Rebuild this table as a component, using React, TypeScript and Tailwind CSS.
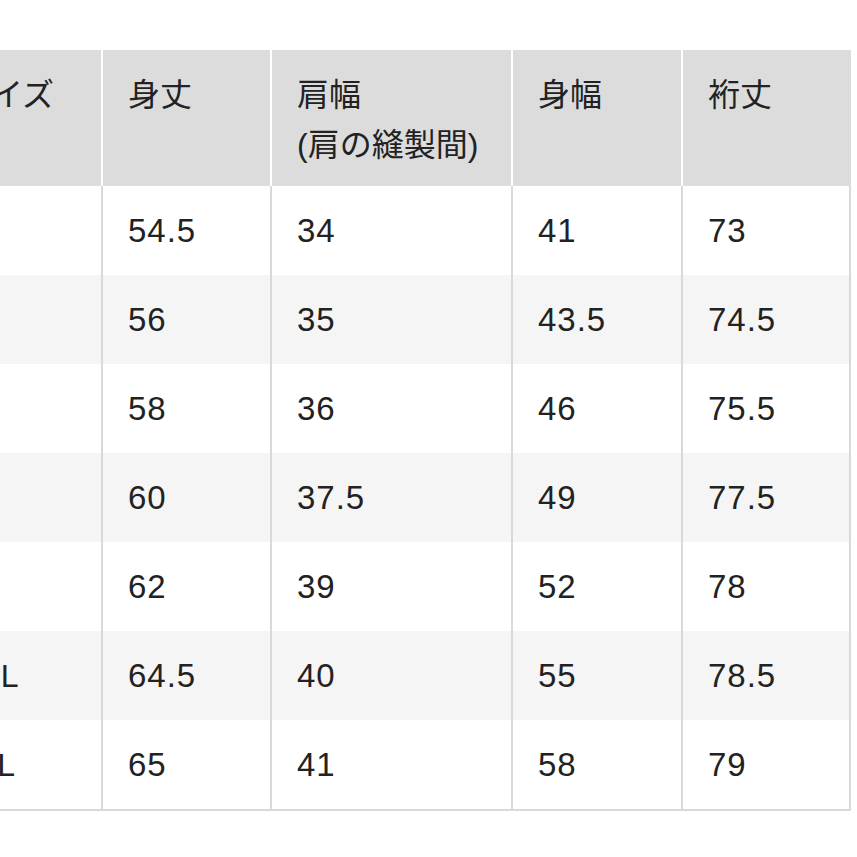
const header = ['サイズ', '身丈', '肩幅\n(肩の縫製間)', '身幅', '裄丈']

const rows = [
  ['XS', '54.5', '34', '41', '73'],
  ['S', '56', '35', '43.5', '74.5'],
  ['M', '58', '36', '46', '75.5'],
  ['L', '60', '37.5', '49', '77.5'],
  ['XL', '62', '39', '52', '78'],
  ['XXL', '64.5', '40', '55', '78.5'],
  ['3XL', '65', '41', '58', '79'],
]

const cols = 'grid grid-cols-[169px_169px_241px_170px_168px]'

export default function App() {
  return (
    <div className="w-[857px] h-[857px] overflow-hidden bg-white text-[#222] font-['Liberation_Sans','Noto_Sans_CJK_JP',sans-serif]">
      <div className="ml-[-66px] mt-[50px] w-[917px]">
        <div className={`${cols} h-[136px] bg-[#dcdcdc]`}>
          {header.map((h, i) => (
            <div
              key={i}
              className="border-r-2 border-white pl-[25px] pt-[20px] text-[32px] leading-[50px] whitespace-pre-line last:border-r-0"
            >
              {h}
            </div>
          ))}
        </div>
        <div className="border-b-2 border-[#d9d9d9]">
          {rows.map((r, ri) => (
            <div
              key={ri}
              className={`${cols} h-[89px] ${ri % 2 === 1 ? 'bg-[#f5f5f5]' : 'bg-white'}`}
            >
              {r.map((c, ci) => (
                <div
                  key={ci}
                  className={`flex items-center border-r-2 border-[#d9d9d9] ${
                    ci === 0 ? 'pl-[24px] text-[32px]' : 'pl-[25px] text-[33px] tracking-[1px]'
                  }`}
                >
                  {c}
                </div>
              ))}
            </div>
          ))}
        </div>
      </div>
    </div>
  )
}
